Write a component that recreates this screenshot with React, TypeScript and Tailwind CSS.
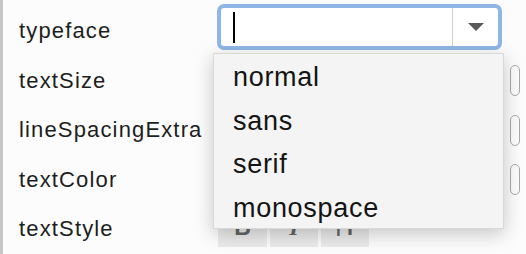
import React from "react";

const font = { fontFamily: '"Liberation Sans", Arial, sans-serif' };

function Pill() {
  return <div className="ml-auto mr-[6px] w-[10px] h-[31px] rounded-full border-[1.5px] border-[#a9a9a9]" />;
}

function Label({ children }: { children: React.ReactNode }) {
  return (
    <div className="w-[214px] shrink-0 pl-[16px] text-[22px] tracking-[1.15px] text-[#1e1e1e] leading-none">
      {children}
    </div>
  );
}

export default function App() {
  return (
    <div className="relative w-[526px] h-[254px] overflow-hidden bg-[#fcfcfc] flex" style={font}>
      <div className="w-[3px] shrink-0 bg-[#c6c6c6]" />
      <div className="flex-1 flex flex-col pt-[5px]">
        <div className="flex h-[51px] items-center">
          <Label>typeface</Label>
          <div className="w-[285px] h-[46px] mb-[7px] rounded-[7px] border-[4px] border-[#8fb6e6] bg-white flex overflow-hidden">
            <div className="w-[232px] h-full border-r border-[#d0d0d0] flex items-center pl-[12px]">
              <div className="w-[2px] h-[31px] bg-black" />
            </div>
            <div className="flex-1 flex items-center justify-center">
              <svg width="16" height="8" viewBox="0 0 16 8">
                <path d="M0 0 H16 L8 8 Z" fill="#5a5a5a" />
              </svg>
            </div>
          </div>
        </div>
        <div className="flex h-[51px] items-center">
          <Label>textSize</Label>
          <Pill />
        </div>
        <div className="flex h-[51px] items-center">
          <Label>lineSpacingExtra</Label>
          <Pill />
        </div>
        <div className="flex h-[51px] items-center">
          <Label>textColor</Label>
          <Pill />
        </div>
        <div className="flex h-[51px] items-center">
          <Label>textStyle</Label>
          <div className="flex gap-[3px] ml-[1px]">
            <div className="w-[49px] h-[36px] bg-[#ebebeb] flex items-end justify-center pb-[8px] text-[#666666] text-[23px] font-extrabold leading-none">
              B
            </div>
            <div
              className="w-[48px] h-[36px] bg-[#ebebeb] flex items-end justify-center pb-[8px] text-[#666666] text-[24px] font-bold italic leading-none"
              style={{ fontFamily: '"Liberation Serif", serif' }}
            >
              I
            </div>
            <div className="w-[48px] h-[36px] bg-[#ebebeb] flex items-end justify-center pb-[8px] text-[#666666] font-extrabold leading-none">
              <span className="text-[16px]">T</span>
              <span className="text-[22px]">T</span>
            </div>
          </div>
        </div>
      </div>
      <div className="absolute left-[213px] top-[53px] w-[291px] h-[176px] bg-[#f4f4f4] border border-[#d9d9d9] shadow-[0_5px_18px_rgba(0,0,0,0.22)] pt-[2px] pl-[19px] text-[27px] tracking-[0.7px] text-[#141414]">
        {["normal", "sans", "serif", "monospace"].map((t) => (
          <div key={t} className="h-[43.5px] leading-[43.5px]">
            {t}
          </div>
        ))}
      </div>
    </div>
  );
}
